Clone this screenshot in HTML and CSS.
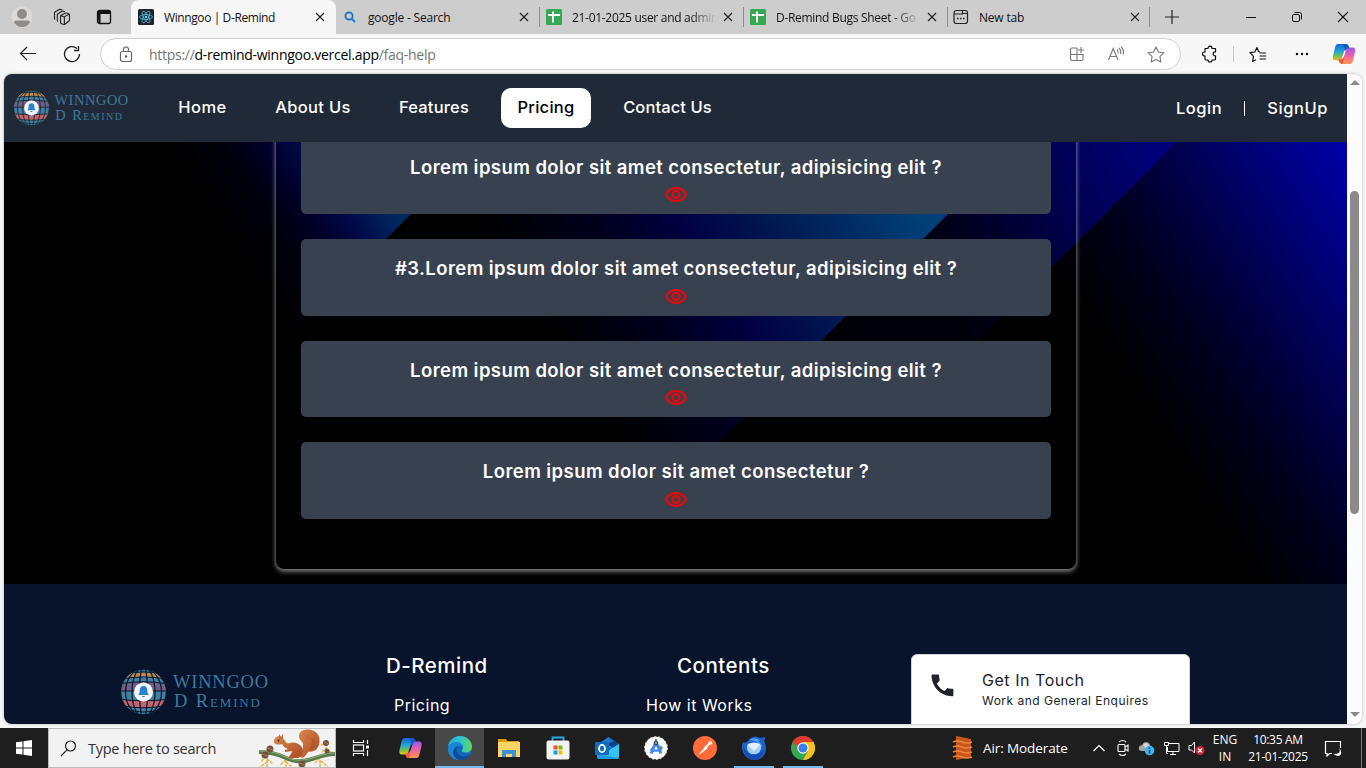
FILE: index.html
```html
<!DOCTYPE html>
<html lang="en">
<head>
<meta charset="utf-8">
<title>Winngoo | D-Remind</title>
<link rel="stylesheet" href="styles.css">
</head>
<body>
<svg class="defs" width="0" height="0" aria-hidden="true">
  <defs>
    <linearGradient id="cpA" x1="0" y1="0" x2="0" y2="1"><stop offset="0" stop-color="#1463d8"/><stop offset=".45" stop-color="#1ea7d8"/><stop offset=".75" stop-color="#7cc04a"/><stop offset="1" stop-color="#f3c21c"/></linearGradient>
    <linearGradient id="cpB" x1="0" y1="0" x2="0" y2="1"><stop offset="0" stop-color="#9a56f0"/><stop offset=".5" stop-color="#ee5fa6"/><stop offset="1" stop-color="#fb9a4a"/></linearGradient>
    <linearGradient id="edA" x1="0" y1="0" x2="1" y2="0"><stop offset="0" stop-color="#2aa9e6"/><stop offset=".55" stop-color="#2fc5c8"/><stop offset="1" stop-color="#63d957"/></linearGradient>
    <linearGradient id="sqF" x1="0" y1="0" x2="1" y2="1"><stop offset="0" stop-color="#dd8850"/><stop offset="1" stop-color="#a94b1f"/></linearGradient>
    <clipPath id="globeClip"><circle cx="22.500" cy="23" r="22.300"/></clipPath>
    <symbol id="logo" viewBox="0 0 148 46">
      <g clip-path="url(#globeClip)">
        <rect width="46" height="46" fill="#42809f"/>
        <path d="M0 0h46v3.500H0z" fill="#34708c"/>
        <path d="M0 5Q22.500 1 45 5V10Q22.500 6 0 10z" fill="#b98a4c"/>
        <path d="M0 14.500Q22.500 11 45 14.500V22H0z" fill="#6d6286"/>
        <path d="M0 30.500Q22.500 33 45 30.500V36.500Q22.500 41 0 36.500z" fill="#c0666e"/>
        <g fill="none" stroke="currentColor" stroke-width="1.200">
          <path d="M0 5Q22.500 1 45 5M0 10Q22.500 6 45 10M0 14.500Q22.500 11 45 14.500M0 22H45M0 30.500Q22.500 33 45 30.500M0 36.500Q22.500 41 45 36.500M8 41Q22.500 45 38 41"/>
          <ellipse cx="22.500" cy="23" rx="4" ry="26"/><ellipse cx="22.500" cy="23" rx="11.500" ry="25"/><ellipse cx="22.500" cy="23" rx="18" ry="23.500"/>
        </g>
      </g>
      <circle cx="22.500" cy="23" r="9.500" fill="#f4f5fa"/>
      <path d="M22.500 17c-3 0-3.800 2.300-3.800 4.700 0 2-.7 3.300-1.700 4.300h11c-1-1-1.700-2.300-1.700-4.300 0-2.400-.8-4.700-3.800-4.700zM20.800 27h3.400l-1.700 1.500z" fill="#2c83cc"/>
      <text x="52" y="19" textLength="95" class="logo-text">WINNGOO</text>
      <text x="53" y="38" textLength="86" class="logo-text logo-caps">D Remind</text>
    </symbol>
    <symbol id="eye" viewBox="0 0 24 24"><path d="M12 6c3.790 0 7.170 2.130 8.820 5.500C19.170 14.870 15.790 17 12 17s-7.170-2.130-8.820-5.500C4.830 8.130 8.210 6 12 6m0-2C7 4 2.730 7.110 1 11.500 2.730 15.890 7 19 12 19s9.270-3.110 11-7.500C21.270 7.110 17 4 12 4zm0 5a2.500 2.500 0 010 5 2.500 2.500 0 010-5m0-2c-2.480 0-4.500 2.020-4.500 4.500S9.520 16 12 16s4.500-2.020 4.500-4.500S14.480 7 12 7z" fill="#f00"/></symbol>
    <symbol id="close" viewBox="0 0 12 12"><path d="M2 2l8 8M10 2l-8 8" stroke="#222" stroke-width="1.200" fill="none"/></symbol>
    <symbol id="sheet" viewBox="0 0 16 16"><rect width="16" height="16" rx="1.500" fill="#34a853"/><path d="M7 2.500v11M2 6h12" stroke="#fff" stroke-width="2" fill="none"/></symbol>
    <symbol id="copilot" viewBox="0 0 24 22">
      <path d="M6 1h8c1.500 0 2.300 1 2.700 2.500L17.500 6h-2c-2 0-3 1-3.600 3l-2 6c-.6 1.500-1.500 2.500-3.400 2.500H3.500C1 17.500.3 15.500 1 13L3.200 4C3.700 2 4.500 1 6 1z" fill="url(#cpA)"/>
      <path d="M18 21h-8c-1.500 0-2.300-1-2.700-2.500L6.500 16h2c2 0 3-1 3.600-3l2-6c.6-1.500 1.500-2.500 3.400-2.500h3c2.500 0 3.200 2 2.500 4.500L20.800 18c-.5 2-1.300 3-2.800 3z" fill="url(#cpB)"/>
      <path d="M13.500 1c1.800 0 2.700 1 3.200 2.500l.5 1.500c-2 .3-3.200 1-4 3l-.8-3c-.5-2-.8-3.500-2.400-4z" fill="#1a53c4"/>
      <path d="M6.500 16.500h2.300c1.700 0 2.700-.8 3.500-2.500l-1.800 7c-1.800 0-2.700-1-3.200-2.500z" fill="#f0583c"/>
    </symbol>
  </defs>
</svg>

<div class="browser">
  <div class="tabstrip">
    <div class="strip-tools">
      <svg width="22" height="22" viewBox="0 0 22 22"><circle cx="11" cy="11" r="10.500" fill="#dcd9d6"/><circle cx="11" cy="8" r="5" fill="#8f8b88"/><path d="M3 16.500q0-2 2-2h12q2 0 2 2-3 4.500-8 4.500t-8-4.500z" fill="#8f8b88"/></svg>
      <svg width="18" height="18" viewBox="0 0 18 18" fill="none" stroke="#222" stroke-width="1.100" stroke-linejoin="round"><path d="M7.500 7.700L12 5.200q.7-.4 1.400-.2l2.300.7q.8.300.8 1.200v5q0 .7-.6 1.100L12 16.200q-.6.400-1.300.2l-2.500-.8q-.7-.2-.7-1zM7.700 7.700l3.700 1.200 4.800-2.900M11.400 9v7M4.800 13.600q-.5-.3-.5-1V6.200L9.500 3l2.500.7M2 11.500q-.5-.3-.5-1V4.300L6.700 1.200l2.500.7"/></svg>
      <svg width="16" height="16" viewBox="0 0 16 16"><rect x="1.500" y="1.500" width="13" height="13" rx="2" fill="none" stroke="#111" stroke-width="1.300"/><path d="M1.500 2h13v3H4.500v9h-2z" fill="#111"/></svg>
    </div>
    <div class="tab tab-active">
      <svg width="16" height="16" viewBox="0 0 16 16"><rect width="16" height="16" rx="1.500" fill="#20232a"/><g fill="none" stroke="#53c1de" stroke-width=".8"><ellipse cx="8" cy="8" rx="6.500" ry="2.500"/><ellipse cx="8" cy="8" rx="6.500" ry="2.500" transform="rotate(60 8 8)"/><ellipse cx="8" cy="8" rx="6.500" ry="2.500" transform="rotate(120 8 8)"/></g><circle cx="8" cy="8" r="1.300" fill="#61dafb"/></svg>
      <span class="tab-title t-winn">Winngoo | D-Remind</span>
      <svg class="tab-close"><use href="#close"/></svg>
    </div>
    <div class="tab">
      <svg width="16" height="16" viewBox="0 0 16 16" fill="none" stroke="#1a73c8" stroke-width="1.800"><circle cx="7" cy="7" r="3.600"/><path d="M9.700 9.700l3.300 3.300"/></svg>
      <span class="tab-title t-google">google - Search</span>
      <svg class="tab-close"><use href="#close"/></svg>
    </div>
    <div class="tab tab-line">
      <svg width="16" height="16"><use href="#sheet"/></svg>
      <span class="tab-title fade">21-01-2025 user and admin</span>
      <svg class="tab-close"><use href="#close"/></svg>
    </div>
    <div class="tab tab-line">
      <svg width="16" height="16"><use href="#sheet"/></svg>
      <span class="tab-title fade">D-Remind Bugs Sheet - Go</span>
      <svg class="tab-close"><use href="#close"/></svg>
    </div>
    <div class="tab tab-line tab-last">
      <svg width="16" height="16" viewBox="0 0 16 16" fill="none" stroke="#222" stroke-width="1.200"><rect x="1" y="1.500" width="13.500" height="13" rx="2.500"/><path d="M1 5h8.500V2M9.500 4.500h5"/><path d="M4 9.500h8" stroke-width="1.600" stroke-dasharray="1.600 1.400"/></svg>
      <span class="tab-title">New tab</span>
      <svg class="tab-close"><use href="#close"/></svg>
    </div>
    <svg class="newtab" width="16" height="16" viewBox="0 0 16 16"><path d="M8 1v14M1 8h14" stroke="#222" stroke-width="1.200"/></svg>
    <div class="window-buttons">
      <svg width="12" height="12" viewBox="0 0 12 12"><path d="M1 6.500h10" stroke="#111"/></svg>
      <svg width="12" height="12" viewBox="0 0 12 12" fill="none" stroke="#111"><rect x="1.500" y="3.500" width="7" height="7" rx="1.500"/><path d="M3.500 1.500h5q2 0 2 2v5"/></svg>
      <svg width="12" height="12" viewBox="0 0 12 12"><path d="M1 1l10 10M11 1L1 11" stroke="#111" stroke-width="1.100"/></svg>
    </div>
  </div>

  <div class="toolbar">
    <svg class="back" width="18" height="16" viewBox="0 0 18 16" fill="none" stroke="#222" stroke-width="1.200"><path d="M17 7.500H1.500M8 1L1.500 7.500 8 14"/></svg>
    <svg class="reload" width="18" height="18" viewBox="0 0 18 18" fill="none" stroke="#222" stroke-width="1.300"><path d="M16.500 9A7.500 7.500 0 1 1 14 3.500M15.500 1v4.500H11"/></svg>
    <div class="address">
      <svg class="lock" width="14" height="17" viewBox="0 0 14 17" fill="none" stroke="#666" stroke-width="1.200"><rect x="1.500" y="5.500" width="11" height="10" rx="2"/><path d="M4.500 5.500V3.500q0-2.500 2.500-2.500t2.500 2.500v2"/><circle cx="7" cy="10.500" r=".7" fill="#666"/></svg>
      <span class="url">https://<b>d-remind-winngoo.vercel.app</b>/faq-help</span>
      <div class="address-icons">
        <svg width="16" height="16" viewBox="0 0 16 16" fill="none" stroke="#777" stroke-width="1.100"><path d="M8 2H3Q1.500 2 1.500 3.500v9Q1.500 14.500 3 14.500h9.500q1.500 0 1.500-1.500V8.500H1.500M8 2v12.500M12 1v6M9 4h6"/></svg>
        <svg width="18" height="16" viewBox="0 0 18 16" fill="none" stroke="#777" stroke-width="1.100"><path d="M1.500 14L6.200 2.500 11 14M3 10.500h6.500M10 3.500q1.500 1.500 1 4M12 2q2.500 2.500 1.500 6M14 .7q3.500 3.300 2 7.800"/></svg>
        <svg width="18" height="17" viewBox="0 0 18 17" fill="none" stroke="#777" stroke-width="1.100" stroke-linejoin="round"><path d="M9 1l2.400 5 5.600.7-4.100 3.900 1 5.400L9 13.400 4.100 16l1-5.400L1 6.700 6.600 6z"/></svg>
      </div>
    </div>
    <div class="toolbar-icons">
      <svg width="18" height="18" viewBox="0 0 18 18" fill="none" stroke="#111" stroke-width="1.200" stroke-linejoin="round"><path d="M4 3.500h3q0-2.300 2-2.300t2 2.300h3.500V7q-2.300-.3-2.300 1.800t2.300 2V14q0 1-1 1H11q0 2-2 2t-2-2H5q-1 0-1-1v-3q-2.500 0-2.500-2T4 7z"/></svg>
      <i class="divider"></i>
      <svg width="18" height="17" viewBox="0 0 18 17" fill="none" stroke="#111" stroke-width="1.200" stroke-linejoin="round"><path d="M11 5.800L9.500 5.500 8 1.500 5.800 6 1 6.700l3.500 3.600-.9 5.200L7 13.700M10.500 7H17M10.500 10H17M10.500 13H17"/></svg>
      <svg width="16" height="4" viewBox="0 0 16 4"><circle cx="3" cy="2" r="1.200"/><circle cx="8" cy="2" r="1.200"/><circle cx="13" cy="2" r="1.200"/></svg>
      <svg width="24" height="22"><use href="#copilot"/></svg>
    </div>
  </div>

  <div class="frame">
    <div class="page">
      <header class="site-header">
        <svg class="logo-header" width="115" height="36"><use href="#logo"/></svg>
        <nav class="nav">
          <a class="nav-home">Home</a><a class="nav-about">About Us</a><a class="nav-features">Features</a><a class="nav-pricing">Pricing</a><a class="nav-contact">Contact Us</a>
        </nav>
        <div class="auth"><a>Login</a><i class="auth-bar"></i><a>SignUp</a></div>
      </header>
      <main class="hero">
        <svg class="hero-bg" viewBox="4 142 1343 442" preserveAspectRatio="none">
          <defs>
            <linearGradient id="gD" gradientUnits="userSpaceOnUse" x1="1100" y1="340" x2="1363" y2="171"><stop offset="0" stop-color="#000"/><stop offset=".27" stop-color="#00001e"/><stop offset=".5" stop-color="#000048"/><stop offset="1" stop-color="#0000aa"/></linearGradient>
            <linearGradient id="gC" gradientUnits="userSpaceOnUse" x1="903" y1="255" x2="1126" y2="112"><stop offset="0" stop-color="#000008"/><stop offset=".22" stop-color="#00001c"/><stop offset=".55" stop-color="#000048"/><stop offset="1" stop-color="#000078"/></linearGradient>
            <linearGradient id="gB" gradientUnits="userSpaceOnUse" x1="480" y1="226" x2="797" y2="22"><stop offset="0" stop-color="#000"/><stop offset=".27" stop-color="#00001e"/><stop offset=".45" stop-color="#000042"/><stop offset=".65" stop-color="#001850"/><stop offset="1" stop-color="#004078"/></linearGradient>
            <linearGradient id="gA" gradientUnits="userSpaceOnUse" x1="170" y1="145" x2="304" y2="59"><stop offset="0" stop-color="#000"/><stop offset=".3" stop-color="#00000e"/><stop offset=".5" stop-color="#00002a"/><stop offset=".7" stop-color="#000a48"/><stop offset=".95" stop-color="#002860"/></linearGradient>
          </defs>
          <rect x="4" y="142" width="1343" height="442" fill="url(#gD)"/>
          <path d="M4 142H1177L735 584H4z" fill="#000"/>
          <path d="M4 142H1177L958 361H4z" fill="url(#gC)"/>
          <path d="M4 142H1020L578 584H4z" fill="url(#gB)"/>
          <path d="M4 142H483L41 584H4z" fill="url(#gA)"/>
        </svg>
        <section class="panel">
          <article class="question"><h3>Lorem ipsum dolor sit amet consectetur, adipisicing elit ?</h3><svg><use href="#eye"/></svg></article>
          <article class="question"><h3>#3.Lorem ipsum dolor sit amet consectetur, adipisicing elit ?</h3><svg><use href="#eye"/></svg></article>
          <article class="question"><h3>Lorem ipsum dolor sit amet consectetur, adipisicing elit ?</h3><svg><use href="#eye"/></svg></article>
          <article class="question"><h3>Lorem ipsum dolor sit amet consectetur ?</h3><svg><use href="#eye"/></svg></article>
        </section>
      </main>
      <footer class="site-footer">
        <svg class="logo-footer" width="148" height="46"><use href="#logo"/></svg>
        <div class="foot-col foot-remind"><h4>D-Remind</h4><a>Pricing</a></div>
        <div class="foot-col foot-contents"><h4>Contents</h4><a>How it Works</a></div>
        <div class="contact">
          <svg width="30" height="30" viewBox="0 0 24 24"><path d="M3 3h4.500c.55 0 1 .45 1 1 0 1.250.2 2.450.570 3.570.11.350.03.740-.25 1.020l-2.200 2.200c1.440 2.830 3.760 5.140 6.590 6.590l2.200-2.200c.28-.28.67-.36 1.020-.25 1.120.37 2.320.570 3.570.570.55 0 1 .45 1 1V21c0 .55-.45 1-1 1C9.600 22 2 13.400 2 4c0-.55.45-1 1-1z" fill="#202429" transform="translate(1 .8) scale(.92)"/></svg>
          <div><p class="touch">Get In Touch</p><p class="enquires">Work and General Enquires</p></div>
        </div>
      </footer>
    </div>
    <div class="scrollbar"><i class="arrow up"></i><i class="thumb"></i><i class="arrow down"></i></div>
  </div>
</div>

<div class="taskbar">
  <div class="start"><svg width="16" height="16" viewBox="0 0 16 16" fill="#fff"><path d="M0 2.300L6.500 1.400V7.500H0zM7.500 1.200L16 0V7.500H7.500zM0 8.500H6.500V14.600L0 13.700zM7.500 8.500H16V16L7.500 14.800z"/></svg></div>
  <div class="search">
    <svg width="17" height="17" viewBox="0 0 17 17" fill="none" stroke="#222" stroke-width="1.200"><circle cx="10.500" cy="6" r="5"/><path d="M7 9.800L1 16"/></svg>
    <span>Type here to search</span>
    <svg class="squirrel" width="78" height="39" viewBox="0 0 78 39">
      <g fill="none" stroke="#e8b448" stroke-width="1.500"><path d="M8 27l-5 6M9 27v12M9 30l6 5M9 33l-7 5M28 31l-6 5M28 31v8M28 33l6 5M62 29l-6 6M62 31v8M63 32l7 6M69 13l-7 4M69 18l-6 6M70 22l6 2" stroke-dasharray="3 1"/></g>
      <path d="M1 23Q16 23 28 29T54 30T77 25" fill="none" stroke="#58794a" stroke-width="4"/><path d="M1 22Q16 22 28 28T54 29T77 24" fill="none" stroke="#92ad78" stroke-width="1.200"/>
      <path d="M40 27c5-3 5-8 5-12 0-2-4-4-4-8 0-5 5-7 10-6.500 7 .5 11.500 6 10.500 13-1 7-6 10-11 9-2 2-3 5-6 6.500z" fill="url(#sqF)"/>
      <path d="M48 8q6-1 6 5t-4 8q7-1 8-7 0-6-10-6z" fill="#a94b22" opacity=".5"/>
      <path d="M16 12.500c0-3 3-6 6-5l3 2c2 1 2 4 5 5 5-2 11-1 14 4 2 4 0 9-4 10.500H30l3-4 1-3-7 1v-2l3-1c-3-1-5-3-6-5-3 1-8 1-8-2.500z" fill="url(#sqF)"/>
      <path d="M21 5l2 3 2-3v5h-4z" fill="#c36a35"/><circle cx="20.500" cy="11.500" r=".9" fill="#271b17"/>
      <g fill="#74513e"><circle cx="12" cy="20" r="3.500"/><circle cx="7" cy="26" r="3.500"/><circle cx="44" cy="35" r="3.500"/><circle cx="68" cy="14" r="3"/><circle cx="69" cy="22" r="2.500"/></g>
      <g fill="none" stroke="#b08c6c" stroke-width=".8"><path d="M9 19l6 2M4 25l6 2M41 34l6 2M66 13l4 2"/></g>
    </svg>
  </div>
  <div class="apps">
    <div class="app"><svg width="18" height="18" viewBox="0 0 18 18" fill="none" stroke="#fff" stroke-width="1.200"><path d="M1.500 1v2.500h10V1M1.500 17v-2.500h10V17"/><rect x="1.500" y="6" width="10" height="6"/><path d="M15.500 1v4M15.500 11v6"/><path d="M14 6.500h3v3h-3z" fill="#fff" stroke="none"/></svg></div>
    <div class="app"><svg width="25" height="22"><use href="#copilot"/></svg></div>
    <div class="app app-active running"><svg width="24" height="24" viewBox="0 0 24 24"><circle cx="12" cy="12" r="12" fill="#1268b7"/><path d="M0 12C0 5 5.500 0 12 0s12 5 12 10.500c0 4-3 6-6.300 6-2.700 0-4-1-4-2 0-.8 1.200-1.300 1.200-3.200 0-2.700-2.800-5-6.400-5C4 6.300 0 9.500 0 12z" fill="url(#edA)"/><path d="M8.500 6.500C3.500 7 0 10 0 13c0 6 5 11 11 11-5-2-6-7-4-11 .8-1.500 2-2.500 3.500-3 2-.5 4 .5 4.300 2 .5-3-2.300-6-6.300-5.500z" fill="#1b86d6"/><path d="M10 9.500C7.500 12 8 17 11 19c3.500 2.500 8 1.500 11-.5C19 24 13 25 10 23.500 3 20 4 12 10 9.500z" fill="#114a9b"/></svg></div>
    <div class="app"><svg width="22" height="20" viewBox="0 0 22 20"><path d="M0 1h8l1.500 2H21v8H0z" fill="#d99b12"/><path d="M0 4h22v15H0z" fill="#fbd463"/><path d="M4 19v-7h14v7h-4v-3H8v3z" fill="#3a92d8"/></svg></div>
    <div class="app"><svg width="24" height="24" viewBox="0 0 24 24"><path d="M6.500 6V1.500h11V6" fill="none" stroke="#29a9e8" stroke-width="1.800"/><rect x=".5" y="4.500" width="23" height="19" rx="2" fill="#f3f3f3"/><path d="M7.500 9.500h4v4h-4z" fill="#f25022"/><path d="M12.500 9.500h4v4h-4z" fill="#7fba00"/><path d="M7.500 14.500h4v4h-4z" fill="#00a4ef"/><path d="M12.500 14.500h4v4h-4z" fill="#ffb900"/></svg></div>
    <div class="app"><svg width="24" height="22" viewBox="0 0 24 22"><path d="M3 7L13.500 0 24 7v5H3z" fill="#1b79cc"/><path d="M12 7l8-3.500L24 8v6z" fill="#113f88"/><path d="M2 19l12-6 10-6v13q0 2-2 2H5q-3 0-3-3z" fill="#37c3f2"/><path d="M2 17l22 4q-1 1-2 1H5q-3 0-3-3z" fill="#1f9ce4"/><rect y="5" width="14" height="13" rx="1" fill="#0f6cbd"/><ellipse cx="7" cy="11.500" rx="3" ry="3.600" fill="none" stroke="#fff" stroke-width="1.800"/></svg></div>
    <div class="app"><svg width="24" height="24" viewBox="0 0 24 24"><circle cx="12" cy="12" r="11.300" fill="#fff"/><circle cx="12" cy="12" r="11.500" fill="none" stroke="#cfcfcf" stroke-dasharray="2 2"/><path d="M15 9l4 2.500-2 3z" fill="#35a853"/><path d="M12 6L7 17.500M12 6l5 11.500" stroke="#4284f3" stroke-width="3"/><path d="M6.500 13q5.500 3.500 11 0" fill="none" stroke="#4284f3" stroke-width="2.200"/><circle cx="12" cy="7" r="2.300" fill="#3b4a58"/><circle cx="12" cy="7" r=".8" fill="#fff"/><path d="M12 3v3" stroke="#3b4a58" stroke-width="1.500"/></svg></div>
    <div class="app"><svg width="24" height="24" viewBox="0 0 24 24"><circle cx="12" cy="12" r="12" fill="#ff6c37"/><path d="M5 19l7.500-8.500 2.500 1.500-6.500 5z" fill="#fff"/><circle cx="17.300" cy="6.700" r="2" fill="#ffe2d8"/><path d="M11.500 12.500l5-5" stroke="#fff" stroke-width="2"/></svg></div>
    <div class="app running run-narrow"><svg width="24" height="24" viewBox="0 0 24 24"><path d="M1 6Q3 8 6 5q3-4.500 8-4.500l4 1.500 5-1q.5 2-1 4 3 5 1.500 11-3 8-11 8T1 16Q-1 11 1 6z" fill="#1b64cf"/><path d="M7 4q6-4 12 1l-4-.5q5 3 5.500 7.500Q16 4 7 4z" fill="#4fa5f7"/><path d="M6 8q6-3 12 0l1 4q-2 6-7 6t-7-6z" fill="#e5effb"/><path d="M5.500 8.500L12 15l6.500-6.500Q20 18 12 18T5.500 8.500z" fill="#a8cdf3"/><path d="M1 9q3 10 10 10 8 0 11-7-1 11-10 12Q2 23 1 9z" fill="#164bb0"/></svg></div>
    <div class="app running run-narrow"><svg width="24" height="24" viewBox="0 0 24 24"><circle cx="12" cy="12" r="12" fill="#34a853"/><path d="M12 12L1.600 6A12 12 0 0 1 22.400 6z" fill="#e33b2e"/><path d="M22.400 6A12 12 0 0 1 12 24l5.200-9L12 6z" fill="#fbc116"/><path d="M1.600 6L6.800 15 12 9V5z" fill="#e33b2e"/><path d="M1.600 6L7 15.300 8 12z" fill="#34a853"/><circle cx="12" cy="12" r="5.700" fill="#fff"/><circle cx="12" cy="12" r="4.500" fill="#3b7ded"/></svg></div>
  </div>
  <div class="weather">
    <svg width="22" height="24" viewBox="0 0 22 24"><path d="M4 0l15 3v18L4 24z" fill="#c8571b"/><path d="M1 6q4-2 9 0t10 0M1 11q4-2 9 0t10 0M1 16q4-2 9 0t10 0M1 21q4-2 9 0t10 0" fill="none" stroke="#ee8440" stroke-width="1.400"/></svg>
    <span>Air: Moderate</span>
  </div>
  <div class="tray">
    <svg width="14" height="14" viewBox="0 0 14 14" fill="none" stroke="#fff" stroke-width="1.200"><path d="M1.500 10L7 4.500l5.500 5.500"/></svg>
    <svg width="14" height="18" viewBox="0 0 14 18" fill="none" stroke="#fff" stroke-width="1.100"><rect x="2" y="5.500" width="7" height="7" rx="1"/><path d="M9 8l3-2v6l-3-2M3 3q3.500-3 7 0M3 15q3.500 3 7 0"/></svg>
    <svg width="17" height="16" viewBox="0 0 17 16"><path d="M3 11q-3-1-2-4 1-2 3-2 2-4 6-2.500 2 1 2 3 3 1 3 3.500 0 2-2 2z" fill="#a5a5a5"/><path d="M5 5q3-4 6 0l2 3-5 1z" fill="#d5d5d5"/><circle cx="11.500" cy="10.500" r="4.800" fill="#41b3ee"/><path d="M11.500 7.500V9M11.500 10v3.500" stroke="#123" stroke-width="1.300"/></svg>
    <svg width="17" height="16" viewBox="0 0 17 16" fill="none" stroke="#fff"><path d="M6 3.500h10v8H4.500V7M7 14.500h6M10 11.500v3M1.500 2.500h4v3h-4zM3.500 5.500v8h1.500"/></svg>
    <svg width="18" height="16" viewBox="0 0 18 16"><path d="M1 5.500h2.500L6.500 2v11L3.500 10H1z" fill="none" stroke="#fff"/><circle cx="12" cy="10.500" r="4.500" fill="#d92333"/><path d="M10 8.500l4 4M14 8.500l-4 4" stroke="#fff" stroke-width="1.200"/></svg>
  </div>
  <div class="lang"><span>ENG</span><span>IN</span></div>
  <div class="clock"><span class="time">10:35 AM</span><span class="date">21-01-2025</span></div>
  <svg class="notify" width="18" height="18" viewBox="0 0 18 18"><path d="M8 14.500H5.500L3 17v-2.500H1.500v-12h15V9" fill="none" stroke="#fff" stroke-width="1.200"/><path d="M15 9q3 6-5.500 6 5.500 4 7.500 0 1-3-2-6z" fill="#fff"/></svg>
  <i class="desktop-edge"></i>
</div>
</body>
</html>
```

FILE: styles.css
```css
* { box-sizing: border-box; }
body { margin: 0; width: 1366px; height: 768px; overflow: hidden; background: #f7f7f7; font-family: "Open Sans", "Noto Sans", sans-serif; }
svg { display: block; flex: none; }
h3, h4, p { margin: 0; }
.defs { position: absolute; }

/* Browser window */
.browser { height: 728px; display: flex; flex-direction: column; background: #f7f7f7; }
.tabstrip { height: 34px; display: flex; align-items: stretch; background: #cdcdcd; font-size: 12px; color: #111; }
.strip-tools { width: 131px; display: flex; align-items: center; gap: 22px; padding-left: 11px; }
.strip-tools svg:nth-child(2) { margin-left: -2px; }
.strip-tools svg:nth-child(3) { margin-left: 3px; }
.tab { width: 204px; flex: none; display: flex; align-items: center; padding-left: 7px; }
.tab-active { background: #f7f7f7; border-radius: 8px 8px 0 0; width: 205px; margin-right: -1px; }
.tab-line { background: linear-gradient(#8d8d8d, #8d8d8d) 0 7px / 1px 20px no-repeat; }
.tab-last { width: 203px; padding-left: 6px; background: linear-gradient(#8d8d8d, #8d8d8d) 0 7px / 1px 20px no-repeat, linear-gradient(#8d8d8d, #8d8d8d) 100% 7px / 1px 20px no-repeat; }
.tab-title { width: 144px; margin: 0 6px 0 10px; white-space: nowrap; line-height: 18px; padding-top: 1px; letter-spacing: -.2px; }
.tab-title.t-winn { letter-spacing: -.4px; }
.tab-title.fade { letter-spacing: -.3px; -webkit-mask-image: linear-gradient(90deg, #000 82%, transparent); mask-image: linear-gradient(90deg, #000 82%, transparent); }
.tab-close { width: 12px; height: 12px; }
.newtab { margin: 9px 0 0 14px; }
.window-buttons { display: flex; gap: 34px; align-items: center; margin-left: 65px; }

.toolbar { height: 40px; display: flex; align-items: center; }
.back { margin-left: 19px; }
.reload { margin-left: 26px; }
.address { width: 1081px; height: 32px; margin-left: 19px; border: 1px solid #d0d0d0; border-radius: 16px; background: #fff; display: flex; align-items: center; padding-left: 18px; }
.url { margin-left: 16px; font-size: 14px; color: #757575; letter-spacing: -.28px; white-space: nowrap; }
.url b { font-weight: 400; color: #000; }
.address-icons { margin-left: auto; margin-right: 15px; display: flex; gap: 22px; align-items: center; }
.toolbar-icons { display: flex; align-items: center; margin-left: 20px; }
.divider { width: 1px; height: 16px; background: #c8c8c8; margin-left: 14px; margin-right: 15px; }
.toolbar-icons svg:nth-of-type(3) { margin: 0 22px 0 27px; }

/* Viewport */
.frame { height: 650px; margin: 0 4px; display: flex; border-radius: 8px; overflow: hidden; background: #fcfcfc; box-shadow: 0 0 3px rgba(0, 0, 0, .3); }
.page { width: 1343px; height: 650px; overflow: hidden; font-family: Inter, "Open Sans", sans-serif; }
.scrollbar { width: 15px; display: flex; flex-direction: column; align-items: center; }
.arrow { border: 5px solid transparent; width: 0; height: 0; }
.up { border-top: 0; border-bottom-color: #8b8b8b; margin-top: 6px; }
.down { border-bottom: 0; border-top-color: #8b8b8b; margin-top: 198px; }
.thumb { width: 9px; height: 323px; border-radius: 5px; background: #8b8b8b; margin-top: 106px; }

/* Site header */
.site-header { height: 68px; background: #202938; display: flex; align-items: center; color: #fff; font-size: 16.500px; font-weight: 500; }
.logo-header { margin-left: 10px; color: #202938; }
.logo-text { font-family: "Liberation Serif", serif; font-size: 18.500px; fill: #3d7b9b; }
.logo-caps { font-variant: small-caps; }
.nav { margin-left: 33px; display: flex; gap: 16px; }
.nav a { height: 40px; line-height: 39px; text-align: center; border-radius: 10px; white-space: nowrap; }
.nav-home { width: 81px; letter-spacing: .5px; }
.nav-about { width: 108px; letter-spacing: .3px; }
.nav-features { width: 102px; letter-spacing: .2px; }
.nav .nav-pricing { width: 90px; background: #fff; color: #000; letter-spacing: .25px; }
.nav-contact { width: 121px; letter-spacing: .1px; }
.auth { margin-left: auto; margin-right: 19px; display: flex; align-items: center; line-height: 39px; letter-spacing: .55px; }
.auth-bar { width: 1px; height: 15px; margin: 0 22px; background: #fff; }

/* Questions */
.hero { height: 442px; position: relative; display: flex; flex-direction: column; justify-content: flex-end; align-items: center; overflow: hidden; background: #000; padding-bottom: 15px; }
.hero-bg { position: absolute; left: 0; top: 0; width: 1343px; height: 442px; }
.panel { position: relative; width: 800px; flex: none; margin-left: 1px; padding: 40px 25px 50.500px; border-radius: 8px; box-shadow: 0 3px 5px rgba(255, 255, 255, .38), 0 0 4px rgba(255, 255, 255, .35); display: flex; flex-direction: column; gap: 25px; }
.question { height: 76.500px; padding-top: 16px; border-radius: 5px; background: #384150; color: #fff; display: flex; flex-direction: column; align-items: center; }
.question h3 { font-size: 18.500px; line-height: 27px; font-weight: 600; white-space: nowrap; letter-spacing: .43px; }
.question svg { width: 24px; height: 24px; margin-top: 2.500px; }

/* Footer */
.site-footer { height: 140px; background: #08132c; color: #fff; display: flex; align-items: flex-start; }
.logo-footer { margin: 85px 0 0 117px; color: #08132c; }
.foot-col { padding-top: 67px; display: flex; flex-direction: column; }
.foot-remind { margin-left: 117px; width: 260px; }
.foot-contents { width: 264px; }
.foot-contents h4 { margin-left: 31px; }
.foot-remind a { margin-left: 8px; }
.foot-col h4 { font-size: 20.500px; line-height: 30px; font-weight: 500; letter-spacing: .5px; }
.foot-col a { font-size: 16px; line-height: 24px; margin-top: 12px; letter-spacing: .5px; }
.contact { width: 279px; height: 100px; margin: 70px 0 0 1px; border: 1px solid #d2d4d8; border-radius: 6px; background: #fff; color: #202429; display: flex; padding: 15px 0 0 16px; }
.contact > div { margin-left: 24px; }
.touch { font-size: 16px; line-height: 21px; letter-spacing: .55px; }
.enquires { font-size: 12px; line-height: 19px; letter-spacing: .48px; }

/* Taskbar */
.taskbar { height: 40px; display: flex; align-items: center; background: #1e1e1e; color: #fff; font-size: 12px; }
.start { width: 48px; display: flex; justify-content: center; }
.search { width: 288px; height: 40px; border: 1px solid #bbb; background: #f2f2f2; color: #333; display: flex; align-items: center; padding-left: 11px; font-size: 14.500px; overflow: hidden; }
.search span { margin-left: 11px; white-space: nowrap; letter-spacing: -.28px; width: 129px; }
.squirrel { margin-left: 42px; }
.apps { display: flex; height: 40px; margin-left: 1px; }
.app { width: 49px; display: flex; align-items: center; justify-content: center; }
.app:first-child { margin-left: -1px; width: 50px; }
.app-active { background: #484848; }
.running { box-shadow: inset 0 -2px #76b9ed; }
.run-narrow { background: linear-gradient(#76b9ed, #76b9ed) 50% 100% / 40px 2px no-repeat; box-shadow: none; }
.weather { margin-left: 125px; display: flex; align-items: center; gap: 9px; font-size: 13.500px; white-space: nowrap; letter-spacing: -.1px; }
.weather span { width: 86px; }
.tray { margin-left: 23px; display: flex; align-items: center; gap: 8px; }
.tray svg:nth-child(2) { margin-left: 2px; }
.lang, .clock { display: flex; flex-direction: column; align-items: center; line-height: 17px; white-space: nowrap; }
.lang { margin-left: 7px; width: 24px; }
.clock { margin-left: 12px; width: 58px; letter-spacing: -.3px; }
.notify { margin-left: 17px; }
.desktop-edge { width: 1px; height: 40px; background: #777; margin-left: auto; margin-right: 4px; }
```
